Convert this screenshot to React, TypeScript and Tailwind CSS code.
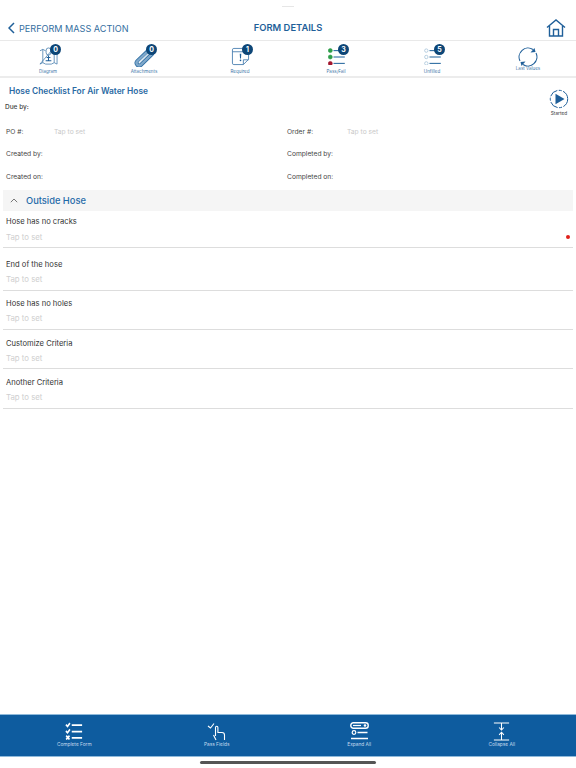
const BLUE = "#1f5f99"

function Badge({ n }: { n: number }) {
  return (
    <div className="absolute top-[-3px] left-[20px] w-[11px] h-[11px] rounded-full bg-[#0d4677] text-white text-[7px] font-bold leading-[11px] text-center">
      {n}
    </div>
  )
}

function DiagramIcon() {
  return (
    <svg width="19" height="19" viewBox="0 0 20 20" fill="none" stroke="#3f78ab" strokeWidth="0.8">
      <path d="M1 4 L4 2.5 L7 4 M13 4 L16 2.5 L19 4 V18 L16 16.5 L13 18 H7 L4 16.5 L1 18 Z" />
      <path d="M4 2.5 V16.5 M16 2.5 V16.5" />
      <path d="M7.5 3.5 a2.5 2.5 0 1 1 5 0 V6 a2.5 2.5 0 0 1-5 0 Z" />
      <path d="M10 9 V14 M8 11 H12 M7 14.5 H13" strokeWidth="1.1" stroke={BLUE} />
    </svg>
  )
}

function ClipIcon() {
  return (
    <svg width="22" height="20" viewBox="0 0 22 20" fill="none">
      <path d="M16 3 L4 14.5 a2.6 2.6 0 0 0 3.6 3.6 L19 7" stroke="#2f6ea3" strokeWidth="4" strokeLinecap="round" />
      <path d="M16 3 L4 14.5 a2.6 2.6 0 0 0 3.6 3.6 L19 7" stroke="#7fa8cb" strokeWidth="2.4" strokeLinecap="round" />
      <path d="M15 6.5 L6 15" stroke="#e3edf5" strokeWidth="0.8" strokeLinecap="round" />
    </svg>
  )
}

function RequiredIcon() {
  return (
    <svg width="19" height="19" viewBox="0 0 20 20" fill="none" stroke="#3f78ab" strokeWidth="0.9">
      <path d="M3 1.5 H17 a1.5 1.5 0 0 1 1.5 1.5 V13 L13 18.5 H3 a1.5 1.5 0 0 1-1.5-1.5 V3 A1.5 1.5 0 0 1 3 1.5 Z" />
      <path d="M1.5 5 H18.5" />
      <path d="M13 18.5 V13.5 H18.5" />
      <path d="M9.2 7 H10.8 L10.5 12 H9.5 Z" fill={BLUE} stroke="none" />
      <circle cx="10" cy="14" r="0.9" fill={BLUE} stroke="none" />
    </svg>
  )
}

function ListIcon({ colors, hollow }: { colors: string[]; hollow?: boolean }) {
  return (
    <svg width="17" height="18" viewBox="0 0 17 18" fill="none">
      {colors.map((c, i) => (
        <g key={i}>
          <circle cx="2.3" cy={3.6 + i * 6.4} r={hollow ? 1.7 : 2} fill={hollow ? "none" : c} stroke={c} strokeWidth="0.6" />
          <path d={`M5.5 ${3.6 + i * 6.4} H16.8`} stroke="#2f6ea3" strokeWidth="1.1" />
        </g>
      ))}
    </svg>
  )
}

function RefreshIcon() {
  return (
    <svg width="20" height="20" viewBox="0 0 20 20" fill="none" stroke={BLUE} strokeWidth="1.1">
      <path d="M2 14 A9 9 0 0 1 15 2.5" />
      <path d="M18 6 A9 9 0 0 1 5 17.5" />
      <path d="M12.5 5.5 L17.5 5 L16.5 1 Z" fill={BLUE} stroke="none" />
      <path d="M7.5 14.5 L2.5 15 L3.5 19 Z" fill={BLUE} stroke="none" />
    </svg>
  )
}

function ToolItem({ label, icon, badge, labelClass }: { label: string; icon: React.ReactNode; badge?: number; labelClass?: string }) {
  return (
    <div className="flex-1 flex flex-col items-center">
      <div className="relative w-[36px] h-[21px] mt-[6px] flex justify-center items-start">
        {icon}
        {badge !== undefined && <Badge n={badge} />}
      </div>
      <div className={`text-[4.5px] leading-[6px] text-[#3d76a8] ${labelClass ?? "mt-[1px]"}`}>{label}</div>
    </div>
  )
}

function Info({ label, value, labelW, className }: { label: string; value?: string; labelW: string; className?: string }) {
  return (
    <div className={`flex items-center text-[6.7px] ${className ?? "flex-1"}`}>
      <div className={`text-[#444] ${labelW}`}>{label}</div>
      {value && <div className="text-[#c9c9c9]">{value}</div>}
    </div>
  )
}

function Field({ title, dot, h, gap, tap }: { title: string; dot?: boolean; h: string; gap: string; tap: string }) {
  return (
    <div className={`relative mx-[3px] border-b border-[#dddddd] ${h}`}>
      <div className={`pl-[3px] text-[7.6px] leading-[12px] text-[#333] ${gap}`}>{title}</div>
      <div className={`pl-[3px] text-[7.8px] leading-[12px] text-[#cfcfcf] ${tap}`}>Tap to set</div>
      {dot && <div className="absolute right-[3px] top-[24px] w-[4px] h-[4px] rounded-full bg-[#e0201b]" />}
    </div>
  )
}

function BottomItem({ label, children }: { label: string; children: React.ReactNode }) {
  return (
    <div className="flex-1 flex flex-col items-center pt-[6px]">
      <div className="h-[20px] flex items-center">{children}</div>
      <div className="text-[4.8px] leading-[6px] text-[#c5dbee]">{label}</div>
    </div>
  )
}

export default function App() {
  return (
    <div className="w-[576px] h-[768px] bg-white flex flex-col font-['Inter','Liberation_Sans',sans-serif] overflow-hidden">
      <div className="h-[6px] flex justify-center">
        <div className="w-[12px] h-[1px] mt-[6px] bg-[#e6e6e6]" />
      </div>
      {/* header */}
      <div className="h-[35px] flex items-center px-[8px] pt-[11px] border-b border-[#e9e9e9]">
        <div className="flex-1 flex items-center">
          <svg width="7" height="12" viewBox="0 0 7 12" fill="none" stroke={BLUE} strokeWidth="1.5">
            <path d="M6 1 L1 6 L6 11" />
          </svg>
          <div className="ml-[4px] text-[9.1px] text-[#356f9f]">PERFORM MASS ACTION</div>
        </div>
        <div className="text-[9.4px] font-semibold text-[#1f5f99]">FORM DETAILS</div>
        <div className="flex-1 flex justify-end">
          <svg width="20" height="18" viewBox="0 0 20 18" fill="none" stroke={BLUE} strokeWidth="1.4" className="mr-[2px] mt-[-2px]">
            <path d="M1 8.5 L10 1 L19 8.5" />
            <path d="M3.5 7 V17 H16.5 V7" />
            <path d="M7.5 17 V10.5 H12.5 V17" />
          </svg>
        </div>
      </div>
      {/* toolbar */}
      <div className="h-[37px] flex border-b-2 border-[#ececec]">
        <ToolItem label="Diagram" badge={0} icon={<DiagramIcon />} />
        <ToolItem label="Attachments" badge={0} icon={<ClipIcon />} />
        <ToolItem label="Required" badge={1} icon={<RequiredIcon />} />
        <ToolItem label="Pass/Fail" badge={3} icon={<ListIcon colors={["#2e9e4a", "#2e9e4a", "#a3172f"]} />} />
        <ToolItem label="Unfilled" badge={5} icon={<ListIcon hollow colors={["#8fb3cf", "#8fb3cf", "#8fb3cf"]} />} />
        <ToolItem label="Last Values" icon={<RefreshIcon />} labelClass="mt-[-2px]" />
      </div>
      {/* form head */}
      <div className="relative h-[112px] px-[5px]">
        <div className="pl-[4px] pt-[7px] text-[8.4px] leading-[12px] font-semibold text-[#2a6aa3]">Hose Checklist For Air Water Hose</div>
        <div className="mt-[6px] text-[6.5px] leading-[8px] font-medium text-[#444]">Due by:</div>
        <div className="absolute right-[7px] top-[11px] flex flex-col items-center">
          <svg width="20" height="20" viewBox="0 0 20 20" fill="none" stroke={BLUE} strokeWidth="1">
            <circle cx="10" cy="10" r="8.7" strokeDasharray="9 1.5 3 1.5" />
            <path d="M6.5 4.8 L15.5 10 L6.5 15.2 Z" fill={BLUE} stroke="none" />
          </svg>
          <div className="text-[4.8px] leading-[6px] mt-[1px] text-[#444]">Started</div>
        </div>
        <div className="mt-[17px] flex flex-col gap-[14.4px] pl-[1px] leading-[8px]">
          <div className="flex">
            <Info label="PO #:" value="Tap to set" labelW="w-[48px]" className="w-[281px]" />
            <Info label="Order #:" value="Tap to set" labelW="w-[60px]" />
          </div>
          <div className="flex">
            <Info label="Created by:" labelW="w-[48px]" className="w-[281px]" />
            <Info label="Completed by:" labelW="w-[60px]" />
          </div>
          <div className="flex">
            <Info label="Created on:" labelW="w-[48px]" className="w-[281px]" />
            <Info label="Completed on:" labelW="w-[60px]" />
          </div>
        </div>
      </div>
      {/* section */}
      <div className="mx-[3px] h-[21px] bg-[#f5f5f5] flex items-center">
        <svg width="8" height="5" viewBox="0 0 8 5" fill="none" stroke="#555" strokeWidth="0.8" className="ml-[7px]">
          <path d="M0.8 4.2 L4 1 L7.2 4.2" />
        </svg>
        <div className="ml-[8px] text-[9.3px] font-medium text-[#1f6aa8]">Outside Hose</div>
      </div>
      <Field title="Hose has no cracks" dot h="h-[37px]" gap="mt-[5px]" tap="mt-[3px]" />
      <Field title="End of the hose" h="h-[43px]" gap="mt-[11px]" tap="mt-[2px]" />
      <Field title="Hose has no holes" h="h-[39px]" gap="mt-[7px]" tap="mt-[2px]" />
      <Field title="Customize Criteria" h="h-[39px]" gap="mt-[8px]" tap="mt-[2px]" />
      <Field title="Another Criteria" h="h-[40px]" gap="mt-[8px]" tap="mt-[2px]" />
      <div className="flex-1" />
      {/* bottom bar */}
      <div className="h-[43px] bg-[#0e5c9f] border-y border-[#8fbadb] flex px-[3px]">
        <BottomItem label="Complete Form">
          <svg width="18" height="18" viewBox="0 0 20 17" fill="none" stroke="white" preserveAspectRatio="none">
            <path d="M1 2.5 L2.8 4.2 L5.5 1" strokeWidth="1.7" />
            <path d="M1 8.5 L2.8 10.2 L5.5 7" strokeWidth="1.7" />
            <path d="M1.3 13 L5 16.5 M5 13 L1.3 16.5" strokeWidth="1.7" />
            <path d="M7.5 3 H19 M7.5 9 H19 M7.5 15 H19" strokeWidth="1.7" />
          </svg>
        </BottomItem>
        <BottomItem label="Pass Fields">
          <svg width="19" height="19" viewBox="0 0 19 19" fill="none" stroke="white" strokeWidth="1.1">
            <path d="M1 4 L3.5 6 L7 1.5" />
            <path d="M9 18 L6.5 13 M8.5 5.5 a1.2 1.2 0 0 1 2.4 0 V10.5 H15 a2.5 2.5 0 0 1 2.5 2.5 V18 M8.5 5.5 V14" />
          </svg>
        </BottomItem>
        <BottomItem label="Expand All">
          <svg width="19" height="18" viewBox="0 0 19 18" fill="none" stroke="white">
            <rect x="0.8" y="0.8" width="17.4" height="5.4" rx="2.5" strokeWidth="1.4" />
            <path d="M3 3.5 H11" strokeWidth="1.2" />
            <circle cx="15" cy="3.5" r="1.3" fill="white" stroke="none" />
            <circle cx="4" cy="10.5" r="1.8" strokeWidth="1.2" />
            <path d="M7.5 10.5 H17.5 M1 16.5 H18" strokeWidth="1.4" />
          </svg>
        </BottomItem>
        <BottomItem label="Collapse All">
          <svg width="17" height="19" viewBox="0 0 17 20" fill="none" stroke="white" strokeWidth="1.1">
            <path d="M0.5 1 H16.5 M0.5 19 H16.5" strokeWidth="1.2" />
            <path d="M8.5 1 V8 M6 5.8 L8.5 8.5 L11 5.8" />
            <path d="M8.5 19 V11 M6 13.5 L8.5 10.8 L11 13.5" />
          </svg>
        </BottomItem>
      </div>
      <div className="h-[11px] flex justify-center">
        <div className="w-[176px] h-[3px] mt-[4px] rounded-full bg-[#555555]" />
      </div>
    </div>
  )
}
